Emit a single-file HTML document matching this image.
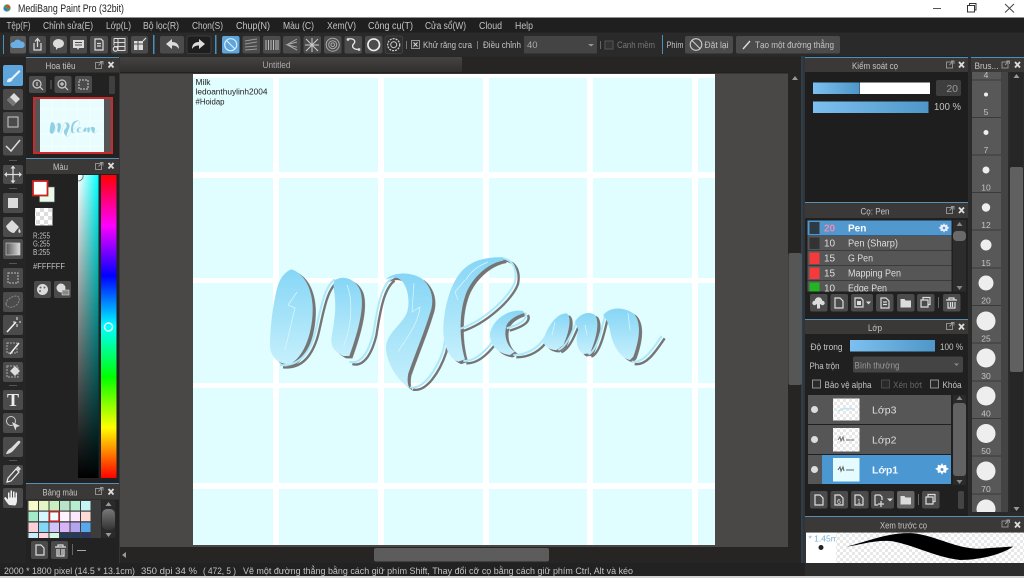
<!DOCTYPE html>
<html><head><meta charset="utf-8"><style>
html,body{margin:0;padding:0;background:#222;overflow:hidden;width:1024px;height:578px}
svg{display:block}
svg.root{filter:blur(.3px)}
text{font-family:"Liberation Sans","DejaVu Sans",sans-serif;font-size:10px;fill:#c4c4c4}
.b{fill:#4b4b4b}
.d{fill:#333}
.h{fill:#3b3938}
.l{fill:#4a90b8}
.i{fill:#dcdcdc}
.s{fill:none;stroke:#dcdcdc;stroke-width:1.2}
.m{text-anchor:middle}
</style></head><body>
<svg class="root" width="1024" height="578" viewBox="0 0 1024 578" xmlns="http://www.w3.org/2000/svg">
<defs>
<linearGradient id="lb" x1="0" y1="0" x2="0" y2="1"><stop offset="0" stop-color="#86d6f6"/><stop offset="1" stop-color="#c6f0fc"/></linearGradient>
<linearGradient id="sl" x1="0" y1="0" x2="1" y2="0"><stop offset="0" stop-color="#7cc0f0"/><stop offset="1" stop-color="#4f97c9"/></linearGradient>
<linearGradient id="hd" x1="0" y1="0" x2="0" y2="1"><stop offset="0" stop-color="#454342"/><stop offset="1" stop-color="#302f2e"/></linearGradient>
<linearGradient id="hue" x1="0" y1="0" x2="0" y2="1"><stop offset="0" stop-color="#f00"/><stop offset=".167" stop-color="#f0f"/><stop offset=".333" stop-color="#00f"/><stop offset=".5" stop-color="#0ff"/><stop offset=".667" stop-color="#0f0"/><stop offset=".833" stop-color="#ff0"/><stop offset="1" stop-color="#f00"/></linearGradient>
<linearGradient id="sq1" x1="0" y1="0" x2="1" y2="0"><stop offset="0" stop-color="#fff"/><stop offset="1" stop-color="#0ff"/></linearGradient>
<linearGradient id="sq2" x1="0" y1="0" x2="0" y2="1"><stop offset="0" stop-color="#000" stop-opacity="0"/><stop offset="1" stop-color="#000"/></linearGradient>
<linearGradient id="gr" x1="0" y1="0" x2="1" y2="0"><stop offset="0" stop-color="#555"/><stop offset="1" stop-color="#ddd"/></linearGradient>
<linearGradient id="pt" x1="0" y1="0" x2="0" y2="1"><stop offset="0" stop-color="#777"/><stop offset="1" stop-color="#333"/></linearGradient>
<pattern id="ck" width="8" height="8" patternUnits="userSpaceOnUse"><rect width="8" height="8" fill="#fff"/><rect width="4" height="4" fill="#ddd"/><rect x="4" y="4" width="4" height="4" fill="#ddd"/></pattern>
<pattern id="ck2" width="6" height="6" patternUnits="userSpaceOnUse"><rect width="6" height="6" fill="#fff"/><rect width="3" height="3" fill="#e8e8e8"/><rect x="3" y="3" width="3" height="3" fill="#e8e8e8"/></pattern>
<g id="thick">
<g transform="translate(260,250) scale(.3333)">
<path d="M95,58 C130,70 155,110 158,170 C160,240 135,320 90,342 C55,345 30,320 30,285 C30,220 45,120 60,90 C70,72 85,60 95,58 Z"/>
<path d="M225,90 C250,75 285,85 300,120 C315,160 300,230 268,318 L250,318 C225,305 210,290 215,262 C220,225 232,180 222,120 C220,105 220,95 225,90 Z"/>
<path d="M375,90 C400,65 450,65 485,85 C515,110 525,150 510,190 C495,240 470,300 445,370 C440,395 445,410 450,415 C415,395 380,340 378,295 C378,250 425,225 440,190 C452,160 445,100 415,85 C400,80 385,85 375,90 Z"/>
</g>
<g transform="translate(460,250) scale(.3333)">
<path d="M130,22 C100,20 50,25 20,50 C-20,80 -45,150 -50,230 C-52,280 -35,325 -5,335 L15,328 C0,280 -5,200 15,140 C30,90 80,40 130,32 Z"/>
<path d="M190,183 C150,175 100,205 90,250 C88,285 115,312 150,315 L165,305 C140,290 130,255 140,225 C150,205 175,195 190,190 Z"/>
<path d="M250,268 C265,225 290,190 320,190 C335,200 330,240 310,285 L290,300 C265,300 248,285 250,268 Z"/>
<path d="M345,215 C355,195 385,180 405,195 C420,215 410,265 390,310 L370,312 C350,300 345,270 355,240 Z"/>
<path d="M430,195 C450,170 490,170 520,190 C545,215 540,265 520,320 L510,330 C480,325 455,280 450,240 C445,215 435,205 430,195 Z"/>
</g>
</g>
<g id="thin">
<g transform="translate(260,250) scale(.3333)">
<path d="M60,345 C110,350 145,320 165,250 C180,190 190,110 225,88"/>
<path d="M268,335 C300,345 325,310 340,250 C350,190 360,110 395,85"/>
<path d="M450,412 C490,420 530,360 550,300 C560,250 565,150 600,75"/>
</g>
<g transform="translate(460,250) scale(.3333)">
<path d="M130,25 C160,30 172,60 165,95 C150,140 70,215 -5,238"/>
<path d="M10,333 C45,335 75,305 98,275"/>
<path d="M140,235 C175,225 205,210 195,188"/>
<path d="M160,315 C200,315 235,295 255,262"/>
<path d="M295,300 C320,290 335,250 350,215"/>
<path d="M385,313 C410,305 425,240 435,195"/>
<path d="M515,335 C550,342 580,295 605,258"/>
</g>
</g>
</defs>

<!-- base -->
<rect width="1024" height="578" fill="#222"/>
<!-- title bar -->
<rect width="1024" height="17.5" fill="#fff"/>
<circle cx="7" cy="8" r="3.6" fill="#3f9d5e"/><path d="M7,4.4 A3.6,3.6 0 0 1 10.6,8 L7,8Z" fill="#d94c3a"/><path d="M3.4,8 A3.6,3.6 0 0 0 7,11.6 L7,8Z" fill="#3a78c9"/>
<text x="18" y="12" textLength="106" lengthAdjust="spacingAndGlyphs" style="font-size:11px;fill:#222">MediBang Paint Pro (32bit)</text>
<path d="M933,8.5H941" stroke="#555" stroke-width="1"/>
<path d="M967.5,5.5H974.5V12H967.5ZM969.5,5.5V3.5H976V10H974.5" fill="none" stroke="#333" stroke-width="1"/>
<path d="M1005,4L1014,12.5M1014,4L1005,12.5" stroke="#444" stroke-width="1"/>

<!-- menu -->
<rect y="17.5" width="1024" height="15" fill="#1f1f1f"/>
<g>
<text x="6.5" y="29" textLength="24" lengthAdjust="spacingAndGlyphs">Tệp(F)</text>
<text x="43" y="29" textLength="50" lengthAdjust="spacingAndGlyphs">Chỉnh sửa(E)</text>
<text x="106" y="29" textLength="25" lengthAdjust="spacingAndGlyphs">Lớp(L)</text>
<text x="143" y="29" textLength="36" lengthAdjust="spacingAndGlyphs">Bộ lọc(R)</text>
<text x="192" y="29" textLength="31" lengthAdjust="spacingAndGlyphs">Chọn(S)</text>
<text x="236" y="29" textLength="34" lengthAdjust="spacingAndGlyphs">Chụp(N)</text>
<text x="283" y="29" textLength="31" lengthAdjust="spacingAndGlyphs">Màu (C)</text>
<text x="327" y="29" textLength="29" lengthAdjust="spacingAndGlyphs">Xem(V)</text>
<text x="368" y="29" textLength="45" lengthAdjust="spacingAndGlyphs">Công cụ(T)</text>
<text x="425" y="29" textLength="41" lengthAdjust="spacingAndGlyphs">Cửa sổ(W)</text>
<text x="479" y="29" textLength="23" lengthAdjust="spacingAndGlyphs">Cloud</text>
<text x="515" y="29" textLength="18" lengthAdjust="spacingAndGlyphs">Help</text>
</g>

<!-- toolbar -->
<rect y="32.5" width="1024" height="24" fill="#2a2a2a"/>
<rect x="3" y="35" width="1" height="19" class="l"/>
<rect x="153" y="35" width="1.5" height="19" class="l"/>
<rect x="215" y="35" width="1.5" height="19" class="l"/>
<rect x="662" y="35" width="1" height="19" class="l"/>
<rect x="10" y="36" width="16" height="17.5" rx="2" fill="#5a5a5a"/>
<path d="M13,48 a3,3 0 0 1 1,-6 a4,4 0 0 1 7,-0.5 a3.2,3.2 0 0 1 1,6.5Z" fill="#6ab0e6"/>
<rect x="29" y="36" width="17" height="17.5" rx="2" class="b"/><path d="M34,43v7h7v-7M37.5,47V39M35,41.5l2.5,-3l2.5,3" class="s"/>
<rect x="50" y="36" width="17" height="17.5" rx="2" class="b"/><path d="M53,44 a5.500,4.500 0 1 1 5,4 l-2,2 v-2.500 a5,4 0 0 1 -3,-3.500Z" class="i"/>
<rect x="70" y="36" width="17" height="17.500" rx="2" class="b"/><path d="M73,40h11v8h-5l-1,2l-1,-2h-4Z" class="i"/><path d="M75,42.500h7M75,45h7" stroke="#4b4b4b"/>
<rect x="90" y="36" width="18" height="17.500" rx="2" class="b"/><path d="M95,39h6l2,2v9h-8ZM97,43.500h4M97,46h4" class="s"/>
<rect x="111" y="36" width="17" height="17.500" rx="2" class="b"/><path d="M114,38.500h11v12h-7M114,38.500v7M114,42.500h11M114,46.500h11M118,38.500v12" class="s" style="stroke-width:1"/><circle cx="115.500" cy="49" r="2.200" class="s"/>
<rect x="131" y="36" width="17" height="17.500" rx="2" class="b"/><path d="M134,41h9v9h-9Z" class="i"/><path d="M134,44h9M138,41v9" stroke="#4b4b4b"/><path d="M143,41l3,-3" class="s"/>
<rect x="160" y="36" width="24" height="17.500" rx="2" class="b"/><path d="M166,44l6,-5v3c5,0 7,3 7,7c-2,-3 -4,-3.500 -7,-3.500v3.500Z" class="i"/>
<rect x="187" y="36" width="24" height="17.500" rx="2" fill="#1e1e1e" stroke="#555" stroke-width=".5"/><path d="M205,44l-6,-5v3c-5,0 -7,3 -7,7c2,-3 4,-3.500 7,-3.500v3.500Z" class="i"/>
<rect x="222" y="36" width="17.500" height="17.500" rx="2" fill="#5ea5dc"/><circle cx="230.700" cy="44.700" r="6" fill="none" stroke="#d8ecf8" stroke-width="1.200"/><path d="M226.500,40.500l8.400,8.400" stroke="#d8ecf8" stroke-width="1.200"/>
<rect x="242.500" y="36" width="17.500" height="17.500" rx="2" class="b"/><path d="M245,41l12,-2M245,44l12,-2M245,47l12,-1M245,50l12,-1" stroke="#999"/>
<rect x="263" y="36" width="17.500" height="17.500" rx="2" class="b"/><path d="M266,40v10M268.500,40v10M271,40v10M273.500,40v10M276,40v10M278,40v10" stroke="#bbb"/>
<rect x="283" y="36" width="17.500" height="17.500" rx="2" class="b"/><path d="M297,39l-10,5.700l10,5.300M297,42l-10,2.700l10,2.500" stroke="#aaa" fill="none"/>
<rect x="303.500" y="36" width="17.500" height="17.500" rx="2" class="b"/><path d="M306,39l12,12M318,39l-12,12M312,38v14M305,45h14" stroke="#ccc"/>
<rect x="324" y="36" width="17.500" height="17.500" rx="2" class="b"/><circle cx="332.700" cy="44.700" r="6.500" fill="none" stroke="#aaa"/><circle cx="332.700" cy="44.700" r="4" fill="none" stroke="#aaa"/><circle cx="332.700" cy="44.700" r="1.800" fill="none" stroke="#aaa"/>
<rect x="344.500" y="36" width="17.500" height="17.500" rx="2" class="b"/><path d="M348,39c6,-1 8,2 6,4.500c-3,3 -1,6 5,6" fill="none" stroke="#e8e8e8" stroke-width="1.300"/><circle cx="348" cy="39.500" r="1.400" class="i"/><circle cx="359" cy="49.500" r="1.400" class="i"/>
<rect x="365" y="36" width="17.500" height="17.500" rx="2" class="b"/><circle cx="373.700" cy="44.700" r="5.800" fill="none" stroke="#eee" stroke-width="1.600"/>
<rect x="385" y="36" width="17.500" height="17.500" rx="2" fill="#2f2f2f" stroke="#555" stroke-width=".5"/><circle cx="393.700" cy="44.700" r="6" fill="none" stroke="#ccc" stroke-width="1.300" stroke-dasharray="2 1"/><circle cx="393.700" cy="44.700" r="3" fill="none" stroke="#ccc"/>
<rect x="406" y="41" width="1" height="8" fill="#777"/>
<rect x="411.500" y="40.500" width="8" height="8" fill="#333" stroke="#999"/><path d="M413.500,42.500l4,4M417.500,42.500l-4,4" stroke="#ddd"/>
<text x="423" y="48" textLength="49" lengthAdjust="spacingAndGlyphs" style="font-size:9.500px">Khử răng cưa</text>
<rect x="477" y="41" width="1" height="8" fill="#777"/>
<text x="483" y="48" textLength="38" lengthAdjust="spacingAndGlyphs" style="font-size:9.500px">Điều chỉnh</text>
<rect x="524" y="36" width="73" height="17.500" rx="1" fill="#444"/>
<text x="527" y="48" style="font-size:9.500px;fill:#aaa">40</text>
<path d="M588,44h6l-3,2.500Z" fill="#999"/>
<rect x="600" y="41" width="1" height="8" fill="#666"/>
<rect x="605" y="41" width="8" height="8" fill="#333" stroke="#555"/>
<text x="617" y="48" textLength="38" lengthAdjust="spacingAndGlyphs" style="font-size:9.500px;fill:#777">Canh mềm</text>
<text x="666.500" y="48" textLength="17" lengthAdjust="spacingAndGlyphs" style="font-size:9.500px">Phím</text>
<rect x="685" y="36" width="48" height="17.500" rx="2" class="b"/><circle cx="696" cy="44.500" r="5.800" fill="none" stroke="#ccc" stroke-width="1.100"/><path d="M692,40.500l8,8" stroke="#ccc" stroke-width="1.100"/>
<text x="704.500" y="48" textLength="24" lengthAdjust="spacingAndGlyphs" style="font-size:9.500px">Đặt lại</text>
<rect x="736" y="36" width="104" height="17.500" rx="2" class="b"/><path d="M743,49l7,-8" stroke="#ddd" stroke-width="1.400"/>
<text x="755" y="48" textLength="79" lengthAdjust="spacingAndGlyphs" style="font-size:9.500px">Tạo một đường thẳng</text>

<!-- canvas area -->
<rect x="120" y="56.500" width="682" height="507" fill="#262524"/>
<rect x="120" y="72" width="668" height="475" fill="#4a4846"/>
<rect x="120" y="57" width="342" height="15" rx="1" fill="url(#hd)"/>
<text x="276.500" y="68" class="m" style="font-size:9.500px;fill:#aaa" textLength="28" lengthAdjust="spacingAndGlyphs">Untitled</text>
<rect x="120" y="72" width="668" height="1.500" fill="#222"/>

<!-- image -->
<rect x="193" y="74" width="522" height="471" fill="#fff"/>
<g fill="#e0fdff">
<rect x="193" y="78" width="80" height="94"/><rect x="279" y="78" width="99" height="94"/><rect x="384" y="78" width="99" height="94"/><rect x="489" y="78" width="98" height="94"/><rect x="593" y="78" width="99" height="94"/><rect x="698" y="78" width="17" height="94"/>
<rect x="193" y="178" width="80" height="100"/><rect x="279" y="178" width="99" height="100"/><rect x="384" y="178" width="99" height="100"/><rect x="489" y="178" width="98" height="100"/><rect x="593" y="178" width="99" height="100"/><rect x="698" y="178" width="17" height="100"/>
<rect x="193" y="283" width="80" height="100"/><rect x="279" y="283" width="99" height="100"/><rect x="384" y="283" width="99" height="100"/><rect x="489" y="283" width="98" height="100"/><rect x="593" y="283" width="99" height="100"/><rect x="698" y="283" width="17" height="100"/>
<rect x="193" y="388" width="80" height="95"/><rect x="279" y="388" width="99" height="95"/><rect x="384" y="388" width="99" height="95"/><rect x="489" y="388" width="98" height="95"/><rect x="593" y="388" width="99" height="95"/><rect x="698" y="388" width="17" height="95"/>
<rect x="193" y="489" width="80" height="56"/><rect x="279" y="489" width="99" height="56"/><rect x="384" y="489" width="99" height="56"/><rect x="489" y="489" width="98" height="56"/><rect x="593" y="489" width="99" height="56"/><rect x="698" y="489" width="17" height="56"/>
</g>
<text x="195.500" y="85" style="font-size:8px;fill:#222" textLength="15" lengthAdjust="spacingAndGlyphs">Milk</text>
<text x="195.500" y="94.500" style="font-size:8px;fill:#222" textLength="72" lengthAdjust="spacingAndGlyphs">ledoanthuylinh2004</text>
<text x="195.500" y="104.500" style="font-size:8px;fill:#222" textLength="29" lengthAdjust="spacingAndGlyphs">#Hoidap</text>

<!-- lettering -->
<g transform="translate(3,2.300)"><use href="#thick" fill="#757575" stroke="#757575" stroke-width=".8"/><use href="#thin" fill="none" stroke="#757575" stroke-width="7"/></g>
<use href="#thin" fill="none" stroke="#aee8fa" stroke-width="6"/>
<use href="#thick" fill="url(#lb)"/>
<g fill="none" stroke="#dcf7ff" stroke-width=".7">
<path d="M297,292L288,305L295,308L285,350"/><path d="M347,285C353,300 352,325 344,345"/><path d="M414,283L412,312L420,307C418,325 405,340 398,352"/><path d="M465,280L455,292L458,300"/><path d="M488,262C478,266 470,272 466,280"/><path d="M555,322L552,335M585,325L587,335M628,313L630,330"/>
</g>

<!-- scrollbars -->
<rect x="788" y="72" width="14" height="491" fill="#262524"/>
<rect x="788.500" y="253" width="13" height="132" rx="2" fill="#565656"/>
<path d="M795,76l3,4h-6Z" fill="#999"/>
<rect x="120" y="547" width="668" height="16" fill="#262524"/>
<rect x="374" y="548" width="175" height="13.500" rx="2" fill="#5c5c5c"/>
<path d="M122,555l4,-3v6Z" fill="#999"/>
<rect x="801.500" y="56" width="1" height="507" fill="#3a5a70"/>

<!-- left tools -->
<rect x="0" y="56.500" width="26" height="507" fill="#252525"/>
<rect x="3" y="65" width="20" height="21" rx="2" fill="#5ea5dc"/><path d="M7,82c0,-3 2,-4 4,-4l8,-8l1.500,1.500l-8,8c0,2 -3,3 -5.500,2.500Z" fill="#e6f3fb"/>
<rect x="3" y="89" width="20" height="21" rx="2" class="b"/><path d="M7,100l7,-7l6,6l-7,7Z" class="i"/><path d="M7,100l3,-3l6,6l-3,3Z" fill="#777"/>
<rect x="3" y="112" width="20" height="21" rx="2" class="b"/><rect x="8" y="117" width="10" height="10" fill="none" stroke="#ccc"/>
<rect x="3" y="136" width="20" height="19.500" rx="2" class="b"/><path d="M6,146l5,5l9,-11" fill="none" stroke="#dcdcdc" stroke-width="1.500"/>
<rect x="9" y="160" width="8" height="1" fill="#555"/>
<rect x="3" y="165" width="20" height="19" rx="2" class="b"/><path d="M13,166.500v16M5,174.500h16" stroke="#dcdcdc" stroke-width="1.300"/><path d="M13,165.500l2.500,3h-5ZM13,183.500l2.500,-3h-5ZM4,174.500l3,-2.500v5ZM22,174.500l-3,-2.500v5Z" class="i"/>
<rect x="9" y="188" width="8" height="1" fill="#555"/>
<rect x="3" y="193" width="20" height="20" rx="2" class="b"/><rect x="8" y="198" width="10" height="10" fill="#ddd"/>
<rect x="3" y="217" width="20" height="20" rx="2" class="b"/><path d="M6,226l6,-6l7,7l-5,6c-3,0 -7,-3 -8,-7Z" class="i"/><path d="M19,228c1,2 2,3 1.500,4.500c-1,1 -2.500,0 -2,-2Z" class="i"/>
<rect x="3" y="239" width="20" height="20" rx="2" class="b"/><rect x="6" y="243" width="14" height="12" fill="url(#gr)" stroke="#ccc" stroke-width=".7"/>
<rect x="9" y="263" width="8" height="1" fill="#555"/>
<rect x="3" y="268" width="20" height="20" rx="2" class="b"/><rect x="8" y="273" width="10" height="10" fill="none" stroke="#bbb" stroke-dasharray="2 1"/>
<rect x="3" y="292" width="20" height="20" rx="2" class="b"/><path d="M6,304c0,-4 6,-8 10,-8c3,0 4,3 3,5c-1,4 -6,7 -9,6c-2,0 -4,-1 -4,-3Z" fill="none" stroke="#888" stroke-dasharray="2 1"/>
<rect x="3" y="315" width="20" height="20" rx="2" class="b"/><path d="M7,332l9,-10" stroke="#eee" stroke-width="1.600"/><path d="M17,317v3M17,324v3M13,322h2M19,322h2" stroke="#eee"/>
<rect x="3" y="338" width="20" height="20" rx="2" class="b"/><rect x="7" y="343" width="10" height="10" fill="none" stroke="#aaa" stroke-dasharray="2 1"/><path d="M10,354l9,-11" stroke="#eee" stroke-width="1.500"/>
<rect x="3" y="362" width="20" height="20" rx="2" class="b"/><rect x="7" y="366" width="11" height="11" fill="none" stroke="#aaa" stroke-dasharray="2 1"/><path d="M10,371l5,-5l5,5l-5,5Z" class="i"/>
<rect x="9" y="385" width="8" height="1" fill="#555"/>
<rect x="3" y="390" width="20" height="20" rx="2" class="b"/><text x="13" y="406" class="m" style="font-family:'Liberation Serif',serif;font-weight:bold;font-size:18px;fill:#eee">T</text>
<rect x="3" y="413" width="20" height="20" rx="2" class="b"/><circle cx="11" cy="421" r="4.500" fill="none" stroke="#ccc"/><path d="M12,422l8,4l-3.500,1l-1,3.500Z" class="i"/>
<rect x="3" y="437" width="20" height="20" rx="2" class="b"/><path d="M6,454c1,-3 3,-5 5,-6l7,-7c2,-1 3,1 2,2l-7,8c-2,2 -5,3 -7,3Z" class="i"/>
<rect x="9" y="460" width="8" height="1" fill="#555"/>
<rect x="3" y="465" width="20" height="20" rx="2" class="b"/><path d="M7,482l1,-4l8,-9l3,3l-8,9Z" fill="none" stroke="#eee" stroke-width="1.200"/><path d="M16,468l2,-2l3,3l-2,2Z" class="i"/>
<rect x="3" y="488" width="20" height="20" rx="2" class="b"/><path d="M9,505c-2,-2 -4,-5 -5,-7l1.500,-1l2.500,2.500v-7h1.500v5h1v-7h1.500v7h1v-6h1.500v6h1v-5h1.500v8c0,2 -1,5 -2,5Z" fill="#eee"/>

<!-- navigator -->
<rect x="26" y="56.500" width="93" height="100" fill="#222"/>
<rect x="26" y="57" width="93" height="1" class="l"/>
<rect x="26" y="58" width="93" height="14.500" class="h"/>
<text x="60.500" y="69" class="m" style="font-size:9.500px" textLength="30" lengthAdjust="spacingAndGlyphs">Hoa tiêu</text>
<rect x="95.500" y="62.500" width="6" height="6" fill="none" stroke="#999" stroke-width=".9"/><path d="M98.500,65.500l4,-4M100,61.500h3v3" stroke="#999" fill="none" stroke-width=".9"/>
<path d="M108.500,62l5,5.500M113.500,62l-5,5.500" stroke="#ddd" stroke-width="1.800"/>
<rect x="29" y="76" width="17" height="17" rx="2" class="b"/><circle cx="37" cy="84" r="4" fill="none" stroke="#ccc" stroke-width="1.200"/><path d="M40,87l3,3M37,82v4" stroke="#ccc" stroke-width="1.200"/>
<rect x="50.500" y="80" width="1" height="9" fill="#666"/>
<rect x="54.500" y="76" width="17" height="17" rx="2" class="b"/><circle cx="62" cy="84" r="4" fill="none" stroke="#ccc" stroke-width="1.200"/><path d="M65,87l3,3M60,84h4M62,82v4" stroke="#ccc" stroke-width="1.200"/>
<rect x="75" y="76" width="17" height="17" rx="2" class="b"/><rect x="79" y="80" width="9" height="9" fill="none" stroke="#ccc" stroke-dasharray="2 1"/>
<rect x="109" y="76" width="6" height="18" rx="1" fill="#3f3f3f"/>
<rect x="33" y="97" width="80" height="57" fill="#555"/>
<rect x="40" y="98" width="64" height="55" fill="#e9fdff"/>
<path d="M52,98v55M64,98v55M77,98v55M90,98v55M40,109h64M40,121h64M40,134h64M40,146h64" stroke="#fff" stroke-width=".5"/>
<rect x="34" y="98" width="78" height="55" fill="none" stroke="#cc2a2a" stroke-width="2"/>
<g transform="translate(16.600,89) scale(.1226)"><use href="#thick" fill="#8fd0e4"/><use href="#thin" fill="none" stroke="#86c4d6" stroke-width="6"/></g>

<!-- colour -->
<rect x="26" y="158" width="93" height="1" fill="#5a8fb5"/>
<rect x="26" y="159" width="93" height="15" class="h"/>
<text x="60.500" y="170" class="m" style="font-size:9.500px" textLength="15" lengthAdjust="spacingAndGlyphs">Màu</text>
<rect x="95.500" y="163.500" width="6" height="6" fill="none" stroke="#999" stroke-width=".9"/><path d="M98.500,166.500l4,-4M100,162.500h3v3" stroke="#999" fill="none" stroke-width=".9"/>
<path d="M108.500,163l5,5.500M113.500,163l-5,5.500" stroke="#ddd" stroke-width="1.800"/>
<rect x="39.500" y="187" width="15" height="15" fill="#e6fbe9" stroke="#666" stroke-width=".6"/>
<rect x="33" y="181" width="14.500" height="14.500" fill="#fff" stroke="#c82222" stroke-width="1.800"/>
<rect x="35" y="208" width="17.500" height="17.500" fill="url(#ck)"/>
<text x="33" y="238.500" style="font-size:8.500px" textLength="17" lengthAdjust="spacingAndGlyphs">R:255</text>
<text x="33" y="246.700" style="font-size:8.500px" textLength="17" lengthAdjust="spacingAndGlyphs">G:255</text>
<text x="33" y="255" style="font-size:8.500px" textLength="17" lengthAdjust="spacingAndGlyphs">B:255</text>
<text x="33" y="269" style="font-size:8.500px" textLength="32" lengthAdjust="spacingAndGlyphs">#FFFFFF</text>
<rect x="34" y="281" width="17" height="17" rx="2" class="b"/><circle cx="42.500" cy="289.500" r="5.500" class="i"/><circle cx="40.500" cy="287.500" r="1" fill="#666"/><circle cx="44.500" cy="287.500" r="1" fill="#666"/><circle cx="40" cy="291" r="1" fill="#666"/>
<rect x="54" y="281" width="17" height="17" rx="2" class="b"/><circle cx="61" cy="288" r="4.500" class="i"/><rect x="62" y="290" width="7" height="5" fill="#888" stroke="#ddd" stroke-width=".6"/>
<rect x="78" y="175" width="20.500" height="303" fill="url(#sq1)"/>
<rect x="78" y="175" width="20.500" height="303" fill="url(#sq2)"/>
<path d="M78,181a5,5 0 0 0 5,-6" fill="none" stroke="#777"/>
<rect x="101" y="175" width="15.500" height="303" fill="url(#hue)"/>
<circle cx="108.500" cy="327" r="4" fill="none" stroke="#dff" stroke-width="1.500"/>

<!-- palette -->
<rect x="26" y="483" width="93" height="1" fill="#5a8fb5"/>
<rect x="26" y="484" width="93" height="15.500" class="h"/>
<text x="60" y="495.500" class="m" style="font-size:9.500px" textLength="35" lengthAdjust="spacingAndGlyphs">Bảng màu</text>
<rect x="95.500" y="488.500" width="6" height="6" fill="none" stroke="#999" stroke-width=".9"/><path d="M98.500,491.500l4,-4M100,487.500h3v3" stroke="#999" fill="none" stroke-width=".9"/>
<path d="M108.500,489l5,5.500M113.500,489l-5,5.500" stroke="#ddd" stroke-width="1.800"/>
<rect x="27" y="500" width="74" height="38" fill="#3c3c3c"/>
<g>
<rect x="28.500" y="501" width="9.500" height="9.500" fill="#f9fbc8"/><rect x="39" y="501" width="9.500" height="9.500" fill="#e4f4c4"/><rect x="49.500" y="501" width="9.500" height="9.500" fill="#cbeec0"/><rect x="60" y="501" width="9.500" height="9.500" fill="#b8e4c8"/><rect x="70.500" y="501" width="9.500" height="9.500" fill="#b8eed0"/><rect x="81" y="501" width="9.500" height="9.500" fill="#c4f6f6"/>
<rect x="28.500" y="511.700" width="9.500" height="9.500" fill="#a4ecc8"/><rect x="39" y="511.700" width="9.500" height="9.500" fill="#d4f6fe"/><rect x="49.500" y="511.700" width="9.500" height="9.500" fill="#f0ffff"/><rect x="60" y="511.700" width="9.500" height="9.500" fill="#fdf2fd"/><rect x="70.500" y="511.700" width="9.500" height="9.500" fill="#fbe8fd"/><rect x="81" y="511.700" width="9.500" height="9.500" fill="#fddcd8"/>
<rect x="28.500" y="522.500" width="9.500" height="9.500" fill="#fdd0d8"/><rect x="39" y="522.500" width="9.500" height="9.500" fill="#82d8f6"/><rect x="49.500" y="522.500" width="9.500" height="9.500" fill="#d0c4f8"/><rect x="60" y="522.500" width="9.500" height="9.500" fill="#d8b4f6"/><rect x="70.500" y="522.500" width="9.500" height="9.500" fill="#b4a4ee"/><rect x="81" y="522.500" width="9.500" height="9.500" fill="#58a8ec"/>
<rect x="28.500" y="533" width="9.500" height="5" fill="#c8ecfa"/><rect x="39" y="533" width="9.500" height="5" fill="#fdd4e0"/><rect x="49.500" y="533" width="9.500" height="5" fill="#d4f6e0"/><rect x="60" y="533" width="9.500" height="5" fill="#263a5c"/><rect x="70.500" y="533" width="9.500" height="5" fill="#263a5c"/><rect x="81" y="533" width="9.500" height="5" fill="#2c3560"/>
</g>
<rect x="49.500" y="511.700" width="9.500" height="9.500" fill="none" stroke="#c42222" stroke-width="1.500"/>
<rect x="101.500" y="500" width="14" height="38" rx="2" fill="#2a2a2a"/>
<rect x="102" y="509" width="13" height="21" rx="5" fill="url(#pt)"/>
<path d="M108.500,502l3,4h-6ZM108.500,537l3,-4h-6Z" fill="#999"/>
<rect x="31" y="541" width="17" height="18" rx="2" class="b"/><path d="M36,545h5l3,3v7h-8Z" class="s"/>
<rect x="51" y="541" width="17" height="18" rx="2" class="b"/><path d="M55,547h11M57,549v7h7v-7M59,549v6M62,549v6M58,547v-2h5v2" class="s"/>
<rect x="72" y="544" width="1" height="11" fill="#666"/>
<rect x="77" y="550" width="9" height="1" fill="#aaa"/>
<rect x="119" y="56" width="1" height="507" fill="#353535"/>

<!-- brush control panel -->
<rect x="803" y="56" width="3" height="507" fill="#33343a"/>
<rect x="805" y="56.500" width="163" height="147" fill="#1e1e1e"/>
<rect x="805" y="57" width="163" height="1" class="l"/>
<rect x="805" y="58" width="163" height="14" class="h"/>
<text x="875" y="69" class="m" style="font-size:9.500px" textLength="46" lengthAdjust="spacingAndGlyphs">Kiểm soát cọ</text>
<rect x="946.500" y="62" width="6" height="6" fill="none" stroke="#999" stroke-width=".9"/><path d="M949.500,65l4,-4M951,61h3v3" stroke="#999" fill="none" stroke-width=".9"/>
<path d="M959,62l5,5.500M964,62l-5,5.500" stroke="#ddd" stroke-width="1.800"/>
<rect x="813" y="82.500" width="117" height="11.500" fill="#fff"/>
<rect x="813" y="82.500" width="46" height="11.500" fill="url(#sl)"/>
<rect x="859" y="82.500" width="1" height="11.500" fill="#3a6a8f"/>
<rect x="936" y="80" width="25" height="16" rx="2" fill="#3e3e3e"/>
<text x="958" y="92" text-anchor="end" style="font-size:10.500px;fill:#999">20</text>
<rect x="813" y="101.500" width="115.500" height="11.500" fill="url(#sl)"/>
<text x="961" y="110" text-anchor="end" style="font-size:10.500px" textLength="27" lengthAdjust="spacingAndGlyphs">100 %</text>

<!-- brush list panel -->
<rect x="805" y="202" width="163" height="1" fill="#5a8fb5"/>
<rect x="805" y="203" width="163" height="15" class="h"/>
<text x="875" y="214.500" class="m" style="font-size:9.500px" textLength="29" lengthAdjust="spacingAndGlyphs">Cọ: Pen</text>
<rect x="946.500" y="207.500" width="6" height="6" fill="none" stroke="#999" stroke-width=".9"/><path d="M949.500,210.500l4,-4M951,206.500h3v3" stroke="#999" fill="none" stroke-width=".9"/>
<path d="M959,207.500l5,5.500M964,207.500l-5,5.500" stroke="#ddd" stroke-width="1.800"/>
<rect x="805" y="218" width="163" height="98" fill="#202020"/>
<rect x="807.500" y="220.500" width="144" height="15" fill="#5198cf"/>
<rect x="807.500" y="236" width="144" height="14.500" fill="#565656"/>
<rect x="807.500" y="251" width="144" height="14.500" fill="#565656"/>
<rect x="807.500" y="266" width="144" height="14.500" fill="#565656"/>
<rect x="807.500" y="281" width="144" height="10.500" fill="#565656"/>
<rect x="809.500" y="222" width="10" height="12" fill="#2e3a44"/>
<rect x="809.500" y="237.500" width="10" height="11.500" fill="#333"/>
<rect x="809.500" y="252.500" width="10" height="11.500" fill="#f43a3a"/>
<rect x="809.500" y="267.500" width="10" height="11.500" fill="#f43a3a"/>
<rect x="809.500" y="282.500" width="10" height="9" fill="#22b422"/>
<text x="824" y="231.500" style="font-size:10px;font-weight:bold;fill:#f08bb0">20</text>
<text x="848" y="231.500" style="font-size:10px;font-weight:bold;fill:#fff">Pen</text>
<path d="M944,223l1,2l2.300,-.5l.2,2.300l2,1l-2,1.200l-.2,2.300l-2.300,-.5l-1,2l-1,-2l-2.300,.5l-.2,-2.300l-2,-1.200l2,-1l.2,-2.300l2.300,.5Z" fill="#eef"/><circle cx="944" cy="228" r="1.300" fill="#5198cf"/>
<text x="824" y="246.500" style="font-size:10px;fill:#ddd">10</text>
<text x="848" y="246.500" style="font-size:10px;fill:#ddd" textLength="50" lengthAdjust="spacingAndGlyphs">Pen (Sharp)</text>
<text x="824" y="261.500" style="font-size:10px;fill:#ddd">15</text>
<text x="848" y="261.500" style="font-size:10px;fill:#ddd" textLength="25" lengthAdjust="spacingAndGlyphs">G Pen</text>
<text x="824" y="276.500" style="font-size:10px;fill:#ddd">15</text>
<text x="848" y="276.500" style="font-size:10px;fill:#ddd" textLength="53" lengthAdjust="spacingAndGlyphs">Mapping Pen</text>
<svg x="807" y="281" width="145" height="10.500"><text x="17" y="10.500" style="font-size:10px;fill:#ddd">10</text><text x="41" y="10.500" style="font-size:10px;fill:#ddd" textLength="39" lengthAdjust="spacingAndGlyphs">Edge Pen</text></svg>
<rect x="953" y="220" width="13" height="71.500" fill="#2c2c2c"/>
<rect x="953" y="231" width="13" height="10" rx="4" fill="#6a6a6a"/>
<path d="M959.500,222l3,4h-6ZM959.500,290l3,-4h-6Z" fill="#888"/>
<rect x="810" y="294" width="17.500" height="17.500" rx="2" class="b"/><circle cx="818.500" cy="301" r="3.800" class="i"/><circle cx="814.500" cy="303" r="2.200" class="i"/><circle cx="822.500" cy="303" r="2.200" class="i"/><path d="M817,304h3v4.500h-3Z" class="i"/>
<rect x="830.500" y="294" width="17.500" height="17.500" rx="2" class="b"/><path d="M835,298h5l3,3v7h-8Z" class="s"/>
<rect x="851" y="294" width="22" height="17.500" rx="2" class="b"/><path d="M855,298h6l2,2v7h-8Z" class="s"/><rect x="857" y="301" width="4" height="4" class="i"/><path d="M866,301.500h5l-2.500,3Z" class="i"/>
<rect x="876" y="294" width="17.500" height="17.500" rx="2" class="b"/><path d="M881,298h5l3,3v7h-8ZM883,302h4M883,304.500h4" class="s"/>
<rect x="897" y="294" width="17.500" height="17.500" rx="2" class="b"/><path d="M900.500,299h4l1,1.500h5.500v7h-10.500Z" class="i"/>
<rect x="917" y="294" width="17.500" height="17.500" rx="2" class="b"/><path d="M921,300h7v7h-7ZM923,300v-2.500h7v7h-2" class="s"/>
<rect x="938" y="297" width="1" height="11" fill="#666"/>
<rect x="943" y="294" width="17.500" height="17.500" rx="2" class="b"/><path d="M946,300h11M948,302v6h7v-6M950.500,302v5M952.500,302v5M949,300v-2h5v2" class="s"/>

<!-- layer panel -->
<rect x="805" y="316" width="163" height="200" fill="#202020"/>
<rect x="805" y="319" width="163" height="1" fill="#5a8fb5"/>
<rect x="805" y="320" width="163" height="14" class="h"/>
<text x="875" y="331" class="m" style="font-size:9.500px" textLength="14" lengthAdjust="spacingAndGlyphs">Lớp</text>
<rect x="946.500" y="323.500" width="6" height="6" fill="none" stroke="#999" stroke-width=".9"/><path d="M949.500,326.500l4,-4M951,322.500h3v3" stroke="#999" fill="none" stroke-width=".9"/>
<path d="M959,324l5,5.500M964,324l-5,5.500" stroke="#ddd" stroke-width="1.800"/>
<text x="810.500" y="350" style="font-size:9.500px" textLength="32" lengthAdjust="spacingAndGlyphs">Độ trong</text>
<rect x="850" y="340" width="85" height="11.500" fill="url(#sl)"/>
<text x="963" y="350" text-anchor="end" style="font-size:9.500px" textLength="23" lengthAdjust="spacingAndGlyphs">100 %</text>
<text x="809.500" y="369" style="font-size:9.500px" textLength="30" lengthAdjust="spacingAndGlyphs">Pha trộn</text>
<rect x="853" y="356.500" width="110" height="16" rx="2" fill="#444"/>
<text x="854.500" y="368.500" style="font-size:9.500px;fill:#999" textLength="45" lengthAdjust="spacingAndGlyphs">Bình thường</text>
<path d="M954,363.500h5l-2.500,2.500Z" fill="#888"/>
<rect x="812.500" y="380" width="8" height="8" fill="#2a2a2a" stroke="#aaa" stroke-width=".8"/>
<text x="824.500" y="388" style="font-size:9.500px" textLength="47" lengthAdjust="spacingAndGlyphs">Bảo vệ alpha</text>
<rect x="881.500" y="380" width="8" height="8" fill="#2a2a2a" stroke="#555" stroke-width=".8"/>
<text x="893" y="388" style="font-size:9.500px;fill:#666" textLength="29" lengthAdjust="spacingAndGlyphs">Xén bớt</text>
<rect x="930.500" y="380" width="8" height="8" fill="#2a2a2a" stroke="#aaa" stroke-width=".8"/>
<text x="942.500" y="388" style="font-size:9.500px" textLength="19" lengthAdjust="spacingAndGlyphs">Khóa</text>
<rect x="808" y="395" width="143" height="29" fill="#565656"/>
<rect x="808" y="425" width="143" height="29" fill="#565656"/>
<rect x="808" y="455" width="143" height="29" fill="#565656"/>
<rect x="822" y="455" width="129" height="29" fill="#4b97d2"/>
<circle cx="814.500" cy="409.500" r="3.500" fill="#ddd"/><circle cx="814.500" cy="439.500" r="3.500" fill="#ddd"/><circle cx="814.500" cy="469.500" r="3.500" fill="#ddd"/>
<rect x="833" y="398.500" width="26.500" height="22" fill="url(#ck2)"/><path d="M838,411c6,-3 12,-3 17,-1" stroke="#bfe6f4" stroke-width="1.500" fill="none"/>
<rect x="833" y="428" width="26.500" height="23.500" fill="url(#ck2)"/><path d="M838,440l2,-3l1,4l2,-4l1,4M846,440h8" stroke="#777" stroke-width="1.100" fill="none"/>
<rect x="833" y="458" width="26.500" height="23.500" fill="#e4fcff"/><path d="M838,470l2,-3l1,4l2,-4l1,4M846,470h8" stroke="#666" stroke-width="1.100" fill="none"/>
<text x="872" y="413.500" style="font-size:10.500px;fill:#ddd">Lớp3</text>
<text x="872" y="443.500" style="font-size:10.500px;fill:#ddd">Lớp2</text>
<text x="872" y="473.500" style="font-size:10.500px;font-weight:bold;fill:#f0f8ff">Lớp1</text>
<path d="M942,463l1.300,2.500l2.800,-.7l.3,2.800l2.600,1.200l-2.600,1.400l-.3,2.800l-2.800,-.7l-1.300,2.500l-1.300,-2.500l-2.800,.7l-.3,-2.800l-2.600,-1.400l2.600,-1.200l.3,-2.800l2.800,.7Z" fill="#fff"/><circle cx="942" cy="469.500" r="1.500" fill="#4b97d2"/>
<rect x="953" y="395" width="13" height="90" fill="#2a2a2a"/>
<rect x="953" y="403" width="13" height="73" rx="3" fill="#626262"/>
<path d="M959.500,396l3,4h-6ZM959.500,484l3,-4h-6Z" fill="#888"/>
<rect x="810" y="491" width="17.500" height="17.500" rx="2" class="b"/><path d="M815,495h5l3,3v7h-8Z" class="s"/>
<rect x="830.500" y="491" width="17.500" height="17.500" rx="2" class="b"/><path d="M835,495h5l3,3v7h-8Z" class="s"/><text x="839" y="504" class="m" style="font-size:7px;fill:#ddd">6</text>
<rect x="851" y="491" width="17.500" height="17.500" rx="2" class="b"/><path d="M855,495h5l3,3v7h-8Z" class="s"/><text x="859" y="504" class="m" style="font-size:7px;fill:#ddd">1</text>
<rect x="871" y="491" width="23" height="17.500" rx="2" class="b"/><path d="M875,495h5l2,2v3M875,495v10h3M881,501v6M878,504h6" class="s"/><path d="M887,498.500h6l-3,3Z" class="i"/>
<rect x="897" y="491" width="17.500" height="17.500" rx="2" fill="#666"/><path d="M900.500,496h4l1,1.500h5.500v7h-10.500Z" class="i"/>
<rect x="918" y="494" width="1" height="11" fill="#666"/>
<rect x="922" y="491" width="17.500" height="17.500" rx="2" class="b"/><path d="M926,497h7v7h-7ZM928,497v-2.500h7v7h-2" class="s"/>
<rect x="958" y="491" width="6" height="18" rx="2" fill="#444"/>

<!-- brush size -->
<rect x="968" y="56" width="3.500" height="460" fill="#2c2c2c"/>
<rect x="971" y="56.500" width="53" height="460" fill="#2a2a2a"/>
<rect x="971" y="57" width="53" height="1" class="l"/>
<rect x="971" y="58" width="53" height="14" class="h"/>
<text x="974.500" y="69" style="font-size:9.500px" textLength="24" lengthAdjust="spacingAndGlyphs">Brus...</text>
<rect x="1002" y="62" width="6" height="6" fill="none" stroke="#999" stroke-width=".9"/><path d="M1005,65l4,-4M1006.500,61h3v3" stroke="#999" fill="none" stroke-width=".9"/>
<path d="M1015,62l5,5.500M1020,62l-5,5.500" stroke="#ddd" stroke-width="1.800"/>
<rect x="972" y="72" width="29" height="440" fill="#585858"/>
<rect x="1001" y="72" width="7" height="440" fill="#444"/>
<path d="M972,80H1001M972,117.500H1001M972,155H1001M972,192.500H1001M972,230H1001M972,268H1001M972,305.500H1001M972,343H1001M972,381H1001M972,418.500H1001M972,456H1001M972,494H1001" stroke="#3a3a3a"/>
<circle cx="986" cy="94.500" r="2" fill="#eee"/><circle cx="986" cy="132.500" r="2.500" fill="#eee"/><circle cx="986" cy="170" r="3.500" fill="#eee"/><circle cx="986" cy="207.500" r="4.200" fill="#eee"/><circle cx="986" cy="245" r="5.500" fill="#eee"/><circle cx="986" cy="283" r="7.500" fill="#eee"/><circle cx="986" cy="321" r="9.500" fill="#eee"/><circle cx="986" cy="358" r="9.500" fill="#eee"/><circle cx="986" cy="396" r="9.500" fill="#eee"/><circle cx="986" cy="433.500" r="9.500" fill="#eee"/><circle cx="986" cy="471" r="9.500" fill="#eee"/>
<svg x="972" y="495" width="29" height="17"><circle cx="14" cy="14" r="9.500" fill="#eee"/></svg>
<text x="986" y="78" class="m" style="font-size:8.500px">4</text>
<text x="986" y="115" class="m" style="font-size:8.500px">5</text>
<text x="986" y="153" class="m" style="font-size:8.500px">7</text>
<text x="986" y="190.500" class="m" style="font-size:8.500px">10</text>
<text x="986" y="228" class="m" style="font-size:8.500px">12</text>
<text x="986" y="266" class="m" style="font-size:8.500px">15</text>
<text x="986" y="303.500" class="m" style="font-size:8.500px">20</text>
<text x="986" y="341.500" class="m" style="font-size:8.500px">25</text>
<text x="986" y="379" class="m" style="font-size:8.500px">30</text>
<text x="986" y="416.500" class="m" style="font-size:8.500px">40</text>
<text x="986" y="454" class="m" style="font-size:8.500px">50</text>
<text x="986" y="492" class="m" style="font-size:8.500px">70</text>
<rect x="1010" y="72" width="13" height="440" fill="#262626"/>
<rect x="1010" y="167" width="13" height="205" rx="2" fill="#606060"/>
<path d="M1016.500,74l3,4h-6ZM1016.500,511l3,-4h-6Z" fill="#999"/>

<!-- brush preview -->
<rect x="805" y="516" width="219" height="1" fill="#5a8fb5"/>
<rect x="805" y="517" width="219" height="15" class="h"/>
<text x="903.500" y="528.500" class="m" style="font-size:9.500px" textLength="47" lengthAdjust="spacingAndGlyphs">Xem trước cọ</text>
<rect x="1002" y="521" width="6" height="6" fill="none" stroke="#999" stroke-width=".9"/><path d="M1005,524l4,-4M1006.500,520h3v3" stroke="#999" fill="none" stroke-width=".9"/>
<path d="M1015,522l5,5.500M1020,522l-5,5.500" stroke="#ddd" stroke-width="1.800"/>
<rect x="806" y="532.500" width="218" height="30.500" fill="url(#ck2)"/>
<rect x="806" y="532.500" width="30" height="30.500" fill="#fff"/>
<svg x="806" y="532" width="30" height="30"><text x="2.500" y="9.500" style="font-size:8.500px;fill:#7ab0d0">* 1.45m</text></svg>
<circle cx="821" cy="547.500" r="2.500" fill="#222"/>
<g transform="translate(800,315) scale(.3333)"><path d="M140,695 C200,680 270,650 340,655 C420,665 480,710 560,700 C600,697 630,695 640,695 C600,720 540,735 480,735 C400,725 330,685 270,678 C220,675 180,690 140,695Z" fill="#000"/></g>

<!-- status -->
<rect y="563" width="1024" height="13" fill="#222"/>
<rect x="805" y="563" width="219" height="13" fill="#2c2c2c"/>
<rect y="576" width="1024" height="2" fill="#d4d4d4"/>
<text x="4" y="574" textLength="131" lengthAdjust="spacingAndGlyphs" style="font-size:9.500px">2000 * 1800 pixel   (14.5 * 13.1cm)</text>
<text x="141" y="574" textLength="56" lengthAdjust="spacingAndGlyphs" style="font-size:9.500px">350 dpi   34 %</text>
<text x="203" y="574" textLength="33" lengthAdjust="spacingAndGlyphs" style="font-size:9.500px">( 472, 5 )</text>
<text x="243" y="574" textLength="390" lengthAdjust="spacingAndGlyphs" style="font-size:9.500px">Vẽ một đường thẳng bằng cách giữ phím Shift, Thay đổi cỡ cọ bằng cách giữ phím Ctrl, Alt và kéo</text>
</svg>
</body></html>
